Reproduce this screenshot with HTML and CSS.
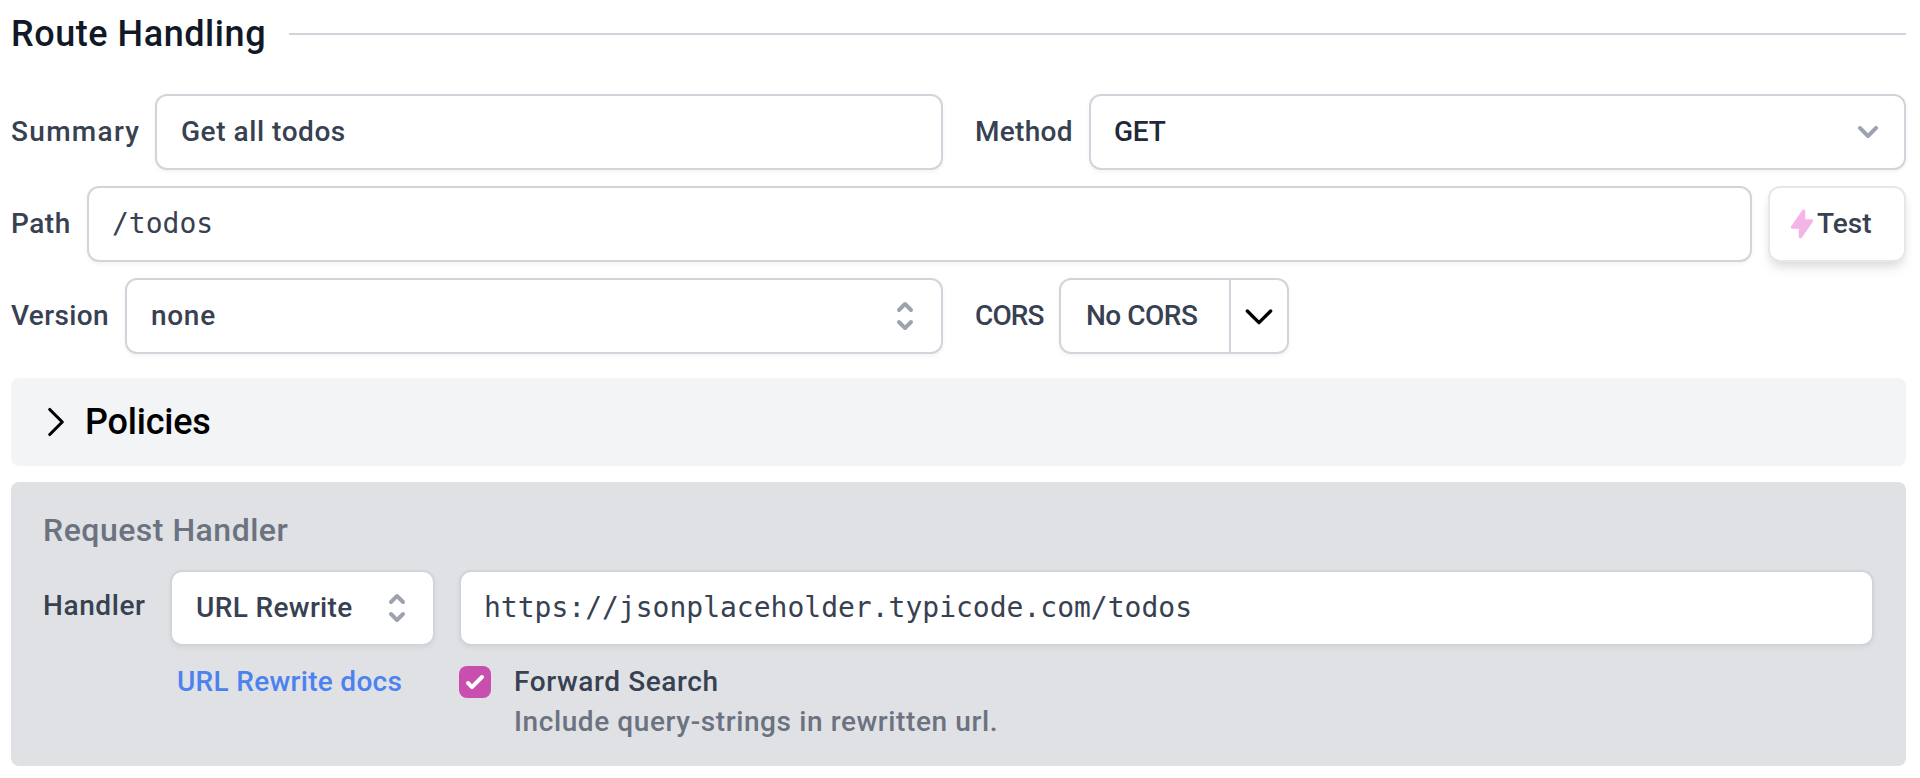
FILE: index.html
```html
<!DOCTYPE html>
<html lang="en">
<head>
<meta charset="utf-8">
<title>Route Handling</title>
<link rel="stylesheet" href="styles.css">
</head>
<body>
<main class="page">
  <header class="section-head"><h1 class="section-title">Route Handling</h1><span class="rule"></span></header>

  <div class="fields">
    <div class="row two-col">
      <div class="field summary">
        <label class="label ls-130">Summary</label>
        <div class="box"><span class="ls-55">Get all todos</span></div>
      </div>
      <div class="field method">
        <label class="label ls-30">Method</label>
        <div class="box dark"><span class="ls-0">GET</span>
          <svg class="icon gray" viewBox="0 0 20 20"><path d="M5.293 7.293a1 1 0 011.414 0L10 10.586l3.293-3.293a1 1 0 111.414 1.414l-4 4a1 1 0 01-1.414 0l-4-4a1 1 0 010-1.414z"/></svg>
        </div>
      </div>
    </div>

    <div class="row path-row">
      <div class="field path">
        <label class="label ls-50">Path</label>
        <div class="box mono">/todos</div>
      </div>
      <button class="test" type="button">
        <svg class="bolt" viewBox="0 0 20 20"><path d="M11.3 1.046A1 1 0 0112 2v5h4a1 1 0 01.82 1.573l-7 10A1 1 0 018 18v-5H4a1 1 0 01-.82-1.573l7-10a1 1 0 011.12-.38z"/></svg>
        <span>Test</span>
      </button>
    </div>

    <div class="row two-col">
      <div class="field version">
        <label class="label ls-35">Version</label>
        <div class="box"><span class="ls-70">none</span>
          <svg class="icon gray" viewBox="0 0 20 20"><path d="M10 3a1 1 0 01.707.293l3 3a1 1 0 01-1.414 1.414L10 5.414 7.707 7.707a1 1 0 01-1.414-1.414l3-3A1 1 0 0110 3zm-3.707 9.293a1 1 0 011.414 0L10 14.586l2.293-2.293a1 1 0 011.414 1.414l-3 3a1 1 0 01-1.414 0l-3-3a1 1 0 010-1.414z"/></svg>
        </div>
      </div>
      <div class="field cors">
        <label class="label ls-n90">CORS</label>
        <div class="split">
          <span class="split-value ls-n50">No CORS</span>
          <span class="split-toggle"><svg class="icon line" viewBox="0 0 24 24"><path d="M19 9l-7 7-7-7"/></svg></span>
        </div>
      </div>
    </div>
  </div>

  <section class="policies">
    <svg class="icon line thin" viewBox="0 0 24 24"><path d="m8.25 4.5 7.5 7.5-7.5 7.5"/></svg>
    <h2 class="policies-title">Policies</h2>
  </section>

  <section class="handler">
    <h2 class="handler-title">Request Handler</h2>
    <div class="handler-grid">
      <label class="label handler-label ls-60">Handler</label>
      <div class="box select"><span class="ls-35">URL Rewrite</span>
        <svg class="icon gray" viewBox="0 0 20 20"><path d="M10 3a1 1 0 01.707.293l3 3a1 1 0 01-1.414 1.414L10 5.414 7.707 7.707a1 1 0 01-1.414-1.414l3-3A1 1 0 0110 3zm-3.707 9.293a1 1 0 011.414 0L10 14.586l2.293-2.293a1 1 0 011.414 1.414l-3 3a1 1 0 01-1.414 0l-3-3a1 1 0 010-1.414z"/></svg>
      </div>
      <div class="box mono">https://jsonplaceholder.typicode.com/todos</div>
      <a class="docs ls-30">URL Rewrite docs</a>
      <div class="forward">
        <span class="check"><svg viewBox="0 0 16 16"><path d="M12.207 4.793a1 1 0 010 1.414l-5 5a1 1 0 01-1.414 0l-2-2a1 1 0 011.414-1.414L6.5 9.086l4.293-4.293a1 1 0 011.414 0z"/></svg></span>
        <div class="forward-text">
          <div class="ls-60">Forward Search</div>
          <div class="hint ls-60">Include query-strings in rewritten url.</div>
        </div>
      </div>
    </div>
  </section>
</main>
</body>
</html>
```
FILE: styles.css
```css
* { box-sizing: border-box; }
body {
  margin: 0;
  background: #fff;
  color: #374151;
  font: 500 28px/40px Roboto, sans-serif;
}
h1, h2 { margin: 0; font-weight: 500; }
.page { padding: 9px 14px 12px 11px; }

.section-head { display: flex; align-items: center; gap: 22px; height: 50px; }
.section-title { width: 256px; white-space: nowrap; font-size: 36px; line-height: 48px; letter-spacing: 0.55px; color: #111827; }
.rule { flex: 1; height: 2px; background: #d1d5db; }

.fields { display: flex; flex-direction: column; gap: 16px; margin-top: 35px; }
.row { display: grid; }
.two-col { grid-template-columns: 932px 1fr; column-gap: 32px; }
.path-row { grid-template-columns: 1fr 138px; column-gap: 16px; }
.field { display: grid; align-items: center; }
.summary { grid-template-columns: 144px 1fr; }
.method { grid-template-columns: 114px 1fr; }
.path { grid-template-columns: 76px 1fr; }
.version { grid-template-columns: 114px 1fr; }
.cors { grid-template-columns: 84px 230px; }
.label { white-space: nowrap; }

.box {
  display: flex;
  align-items: center;
  justify-content: space-between;
  height: 76px;
  padding: 0 16px 0 24px;
  white-space: nowrap;
  background: #fff;
  border: 2px solid #d1d5db;
  border-radius: 12px;
  box-shadow: 0 2px 4px rgba(0, 0, 0, 0.05);
}
.dark { color: #1f2937; padding-left: 23px; }
.mono { font-family: "DejaVu Sans Mono", monospace; font-weight: 400; padding-left: 23px; }

.icon { width: 40px; height: 40px; flex: none; }
.gray { fill: #9ca3af; }
.line { fill: none; stroke: #000; stroke-width: 2; stroke-linecap: round; stroke-linejoin: round; }
.thin { stroke-width: 1.9; }

.test {
  display: flex;
  align-items: center;
  height: 76px;
  padding: 0 0 0 16px;
  font: inherit;
  color: inherit;
  background: #fff;
  border: 2px solid #e5e7eb;
  border-radius: 12px;
  box-shadow: 0 8px 12px -2px rgba(0, 0, 0, 0.1), 0 4px 8px -2px rgba(0, 0, 0, 0.06);
}
.bolt { width: 32px; height: 32px; margin-right: -1px; fill: #f4b4e8; }

.split {
  display: grid;
  grid-template-columns: 1fr 56px;
  height: 76px;
  border: 2px solid #d1d5db;
  border-radius: 12px;
  box-shadow: 0 2px 4px rgba(0, 0, 0, 0.05);
}
.split-value { display: flex; align-items: center; padding-left: 25px; border-right: 2px solid #d1d5db; }
.split-toggle { display: flex; align-items: center; justify-content: center; }

.policies {
  display: flex;
  align-items: center;
  gap: 9px;
  height: 88px;
  margin-top: 24px;
  padding-left: 25px;
  color: #000;
  background: #f3f4f6;
  border-radius: 8px;
}
.policies-title { font-size: 36px; line-height: 48px; letter-spacing: -0.2px; }

.handler {
  height: 284px;
  margin-top: 16px;
  padding: 28px 32px 0;
  background: #e0e1e5;
  border-radius: 8px;
}
.handler-title { font-size: 32px; line-height: 40px; letter-spacing: 0.5px; color: #6b7280; }
.handler-grid {
  display: grid;
  grid-template-columns: 127px 265px 1fr;
  grid-template-rows: 76px auto;
  row-gap: 16px;
  margin-top: 20px;
}
.handler-grid .mono { margin-left: 24px; }
.handler-label { padding-top: 16px; }
.docs { grid-column: 2; padding-left: 7px; color: #4b82f0; white-space: nowrap; }
.forward { display: flex; gap: 23px; padding-left: 24px; }
.check { display: block; width: 32px; height: 32px; margin-top: 4px; background: #c94fae; border-radius: 8px; }
.check svg { display: block; fill: #fff; }
.hint { color: #6b7280; }

.ls-130 { letter-spacing: 1.3px; }
.ls-70 { letter-spacing: 0.7px; }
.ls-60 { letter-spacing: 0.6px; }
.ls-55 { letter-spacing: 0.55px; }
.ls-50 { letter-spacing: 0.5px; }
.ls-35 { letter-spacing: 0.35px; }
.ls-30 { letter-spacing: 0.3px; }
.ls-0 { letter-spacing: -0.2px; }
.ls-n50 { letter-spacing: -0.5px; }
.ls-n90 { letter-spacing: -0.9px; }
```
